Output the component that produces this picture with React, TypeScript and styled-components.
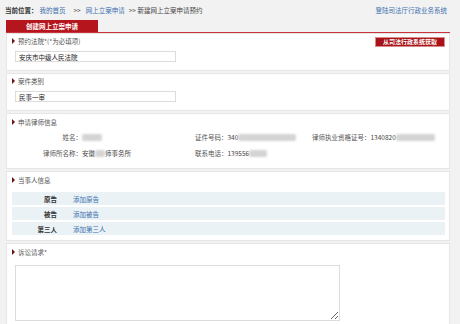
import styled, { createGlobalStyle } from 'styled-components';

const GlobalStyle = createGlobalStyle`
  body {
    margin: 0;
    background: #f2f2f2;
    font-family: 'Noto Sans CJK SC', 'Noto Sans', sans-serif;
    font-size: 6.5px;
    color: #333;
  }
`;

const lawyerRows = [
  [
    { label: '姓名：', value: '', blur: 20 },
    { label: '证件号码：', value: '340', blur: 58 },
    { label: '律师执业资格证号：', value: '1340820', blur: 39 },
  ],
  [
    { label: '律师所名称：', value: '安徽', blur: 10, tail: '师事务所' },
    { label: '联系电话：', value: '139556', blur: 18 },
  ],
];

const parties = [
  { role: '原告', link: '添加原告' },
  { role: '被告', link: '添加被告' },
  { role: '第三人', link: '添加第三人' },
];

export default function App() {
  return (
    <>
      <GlobalStyle />
      <Page>
        <Breadcrumb>
          <Crumbs>
            <strong>当前位置：</strong>
            <CrumbLink $first>我的首页</CrumbLink>
            <Sep $wide>&gt;&gt;</Sep>
            <CrumbLink>网上立案申请</CrumbLink>
            <Sep>&gt;&gt; 新建网上立案申请预约</Sep>
          </Crumbs>
          <CrumbLink>登陆司法厅行政业务系统</CrumbLink>
        </Breadcrumb>

        <Main>
          <TabBar>
            <Tab>创建网上立案申请</Tab>
          </TabBar>

          <Panel>
            <TitleRow>
              <Title>预约法院*(*为必填项)</Title>
              <RedButton>从司法行政系统获取</RedButton>
            </TitleRow>
            <Field defaultValue="安庆市中级人民法院" readOnly />
          </Panel>

          <Panel>
            <TitleRow>
              <Title>案件类别</Title>
            </TitleRow>
            <Field defaultValue="民事一审" readOnly />
          </Panel>

          <Panel $top={3} $bottom={7}>
            <TitleRow>
              <Title>申请律师信息</Title>
            </TitleRow>
            <LawyerInfo>
              {lawyerRows.map((row, i) => (
                <LawyerRow key={i}>
                  {row.map((c, j) =>
                    j === 0 ? (
                      <Cells key={j}>
                        <InfoLabel $right>{c.label}</InfoLabel>
                        <InfoValue>
                          {c.value}
                          <Blur style={{ width: c.blur }} />
                          {c.tail}
                        </InfoValue>
                      </Cells>
                    ) : (
                      <InfoValue key={j}>
                        <InfoLabel>{c.label}</InfoLabel>
                        {c.value}
                        <Blur style={{ width: c.blur }} />
                      </InfoValue>
                    ),
                  )}
                </LawyerRow>
              ))}
            </LawyerInfo>
          </Panel>

          <Panel $top={3} $bottom={5}>
            <TitleRow>
              <Title>当事人信息</Title>
            </TitleRow>
            <PartyTable>
              {parties.map(p => (
                <PartyRow key={p.role}>
                  <Role>{p.role}</Role>
                  <AddLink>{p.link}</AddLink>
                </PartyRow>
              ))}
            </PartyTable>
          </Panel>

          <Panel $top={3}>
            <TitleRow>
              <Title>诉讼请求*</Title>
            </TitleRow>
            <Request />
          </Panel>
        </Main>
      </Page>
    </>
  );
}

const Page = styled.div`
  width: 460px;
  height: 324px;
  overflow: hidden;
`;

const Breadcrumb = styled.div`
  height: 20px;
  display: flex;
  align-items: center;
  justify-content: space-between;
  padding: 0 13px 0 5px;
  box-sizing: border-box;
  white-space: nowrap;

  strong {
    color: #333;
  }
`;

const Crumbs = styled.div`
  display: flex;
  align-items: center;
`;

const CrumbLink = styled.a<{ $first?: boolean }>`
  color: #3b6fae;
  cursor: pointer;
  margin-left: ${p => (p.$first ? 2 : 0)}px;
`;

const Sep = styled.span<{ $wide?: boolean }>`
  margin: ${p => (p.$wide ? '0 5px 0 8px' : '0 0 0 4px')};
  color: #444;
`;

const Main = styled.div`
  margin: 0 10px 0 6px;
`;

const TabBar = styled.div`
  height: 12px;
  border-bottom: 1px solid #c9343a;
  display: flex;
`;

const Tab = styled.div`
  width: 92px;
  height: 12px;
  background: #b5151c;
  color: #fff;
  font-weight: bold;
  display: flex;
  align-items: center;
  justify-content: center;
`;

const Panel = styled.div<{ $top?: number; $bottom?: number }>`
  background: #fff;
  border: 1px solid #e6e6e6;
  padding: ${p => p.$top ?? 2}px 4px ${p => p.$bottom ?? 8}px 5px;
  margin-bottom: 2px;
`;

const TitleRow = styled.div`
  height: 10px;
  display: flex;
  align-items: center;
  justify-content: space-between;
`;

const Title = styled.div`
  display: flex;
  align-items: center;
  color: #555;

  &::before {
    content: '';
    width: 0;
    height: 0;
    border-top: 3px solid transparent;
    border-bottom: 3px solid transparent;
    border-left: 3px solid #6e1212;
    margin-right: 3px;
  }
`;

const RedButton = styled.button`
  height: 10px;
  width: 70px;
  padding: 0;
  margin-top: 2px;
  border: 1px solid #d98a8a;
  background: #a71318;
  color: #fff;
  font-family: inherit;
  font-size: 6px;
  font-weight: bold;
  line-height: 8px;
`;

const Field = styled.input`
  display: block;
  margin: 5px 0 0 3px;
  width: 161px;
  height: 11px;
  box-sizing: border-box;
  border: 1px solid #dcdcdc;
  padding: 0 3px;
  font-family: inherit;
  font-size: 6.5px;
  color: #222;
  outline: none;
`;

const LawyerInfo = styled.div`
  margin-top: 2px;
`;

const LawyerRow = styled.div`
  display: grid;
  grid-template-columns: 70px 113px 117px 1fr;
  height: 16px;
  align-items: center;
  white-space: nowrap;
`;

const Cells = styled.div`
  display: contents;
`;

const InfoLabel = styled.span<{ $right?: boolean }>`
  color: #555;
  text-align: ${p => (p.$right ? 'right' : 'left')};
`;

const InfoValue = styled.div`
  display: flex;
  align-items: center;
  color: #444;
`;

const Blur = styled.span`
  display: inline-block;
  height: 7px;
  background: #d4d4d4;
  filter: blur(1.2px);
  border-radius: 2px;
`;

const PartyTable = styled.div`
  margin-top: 7px;
  display: flex;
  flex-direction: column;
  gap: 2px;
`;

const PartyRow = styled.div`
  height: 13px;
  background: #eaf2f5;
  display: flex;
  align-items: center;
`;

const Role = styled.span`
  width: 45px;
  text-align: right;
  font-weight: bold;
  color: #333;
`;

const AddLink = styled.a`
  margin-left: 16px;
  color: #3b6fae;
  cursor: pointer;
`;

const Request = styled.textarea`
  display: block;
  margin: 8px 0 0 3px;
  width: 325px;
  height: 56px;
  box-sizing: border-box;
  border: 1px solid #dcdcdc;
  outline: none;
`;
